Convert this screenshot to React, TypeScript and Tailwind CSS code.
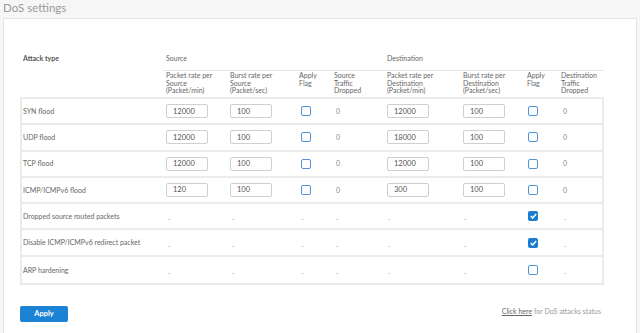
import React from 'react';

type Row = {
	label: string;
	src?: [string, string];
	dst?: [string, string];
	srcFlag?: boolean;
	dstFlag: boolean;
};

const rows: Row[] = [
	{ label: 'SYN flood', src: ['12000', '100'], dst: ['12000', '100'], srcFlag: false, dstFlag: false },
	{ label: 'UDP flood', src: ['12000', '100'], dst: ['18000', '100'], srcFlag: false, dstFlag: false },
	{ label: 'TCP flood', src: ['12000', '100'], dst: ['12000', '100'], srcFlag: false, dstFlag: false },
	{ label: 'ICMP/ICMPv6 flood', src: ['120', '100'], dst: ['300', '100'], srcFlag: false, dstFlag: false },
	{ label: 'Dropped source routed packets', dstFlag: true },
	{ label: 'Disable ICMP/ICMPv6 redirect packet', dstFlag: true },
	{ label: 'ARP hardening', dstFlag: false },
];

const cols = 'grid grid-cols-[143px_64px_69px_35px_53px_76px_64px_34px_46px]';

const Check = ({ on }: { on: boolean }) =>
	on ? (
		<span className="flex h-[10px] w-[10px] items-center justify-center rounded-[2px] bg-[#1b7dd0]">
			<svg width="7" height="6" viewBox="0 0 7 6">
				<path d="M0.8 3.1 L2.7 4.9 L6.2 1.1" fill="none" stroke="#fff" strokeWidth="1.5" />
			</svg>
		</span>
	) : (
		<span className="block h-[10px] w-[10px] rounded-[2px] border border-[#4f94d8] bg-white"></span>
	);

const Field = ({ value }: { value: string }) => (
	<div className="flex h-[14px] w-[42px] items-center rounded-[2px] border border-[#cfcfcf] bg-white pl-[6px] text-[7.5px] text-[#555]">
		{value}
	</div>
);

const Dash = () => <span className="text-[7px] text-[#aaa]">-</span>;

export default function App() {
	return (
		<div className="h-screen overflow-hidden bg-[#f6f6f6] font-['Lato',sans-serif]">
			<div className="h-[18px] pl-[3px] text-[11.5px] leading-[16px] text-[#9a9a9a]">DoS settings</div>
			<div className="mx-[3px] h-[400px] border border-[#e4e4e4] bg-white pl-[16px] pt-[33px]">
				<div className="w-[584px]">
					{/* header */}
					<div className={`${cols} h-[19px] text-[7px] text-[#666]`}>
						<div className="pl-[3px] font-bold leading-[12px] text-[#555]">Attack type</div>
						<div className="col-span-4 border-b border-[#e6e6e6] pl-[3px] leading-[12px]">Source</div>
						<div className="col-span-4 border-b border-[#e6e6e6] pl-[3px] leading-[12px]">Destination</div>
					</div>
					<div className={`${cols} h-[26px] pt-[1px] text-[7px] leading-[7.7px] text-[#666]`}>
						<div></div>
						<div className="pl-[3px]">Packet rate per<br />Source<br />(Packet/min)</div>
						<div className="pl-[3px]">Burst rate per<br />Source<br />(Packet/sec)</div>
						<div className="pl-[3px]">Apply<br />Flag</div>
						<div className="pl-[3px]">Source<br />Traffic<br />Dropped</div>
						<div className="pl-[3px]">Packet rate per<br />Destination<br />(Packet/min)</div>
						<div className="pl-[3px]">Burst rate per<br />Destination<br />(Packet/sec)</div>
						<div className="pl-[3px]">Apply<br />Flag</div>
						<div className="pl-[3px]">Destination<br />Traffic<br />Dropped</div>
					</div>
					{/* body */}
					<div className="border-2 border-[#ebebeb]">
						{rows.map((r, i) => (
							<div
								key={r.label}
								className={`${cols} -ml-[2px] h-[26.3px] items-center ${i < rows.length - 1 ? 'border-b-2 border-[#ebebeb]' : ''}`}
							>
								<div className="pl-[3px] text-[7px] text-[#666]">{r.label}</div>
								{r.src ? (
									<>
										<div className="pl-[3px]"><Field value={r.src[0]} /></div>
										<div className="pl-[3px]"><Field value={r.src[1]} /></div>
										<div className="pl-[5px]"><Check on={!!r.srcFlag} /></div>
										<div className="pl-[5px] text-[7px] text-[#888]">0</div>
										<div className="pl-[3px]"><Field value={r.dst![0]} /></div>
										<div className="pl-[3px]"><Field value={r.dst![1]} /></div>
										<div className="pl-[4px]"><Check on={r.dstFlag} /></div>
										<div className="pl-[5px] text-[7px] text-[#888]">0</div>
									</>
								) : (
									<>
										<div className="pl-[5px]"><Dash /></div>
										<div className="pl-[5px]"><Dash /></div>
										<div className="pl-[5px]"><Dash /></div>
										<div className="pl-[5px]"><Dash /></div>
										<div className="pl-[4px]"><Dash /></div>
										<div className="pl-[4px]"><Dash /></div>
										<div className="pl-[4px]"><Check on={r.dstFlag} /></div>
										<div className="pl-[6px]"><Dash /></div>
									</>
								)}
							</div>
						))}
					</div>
					<div className="mt-[21px] flex items-start justify-between">
						<button className="h-[16px] w-[48px] rounded-[2px] bg-[#1c82d3] text-[7.5px] font-bold text-white">
							Apply
						</button>
						<div className="pr-[3px] text-[7px] leading-[10px] text-[#999]">
							<span className="text-[#666] underline">Click here</span> for DoS attacks status
						</div>
					</div>
				</div>
			</div>
		</div>
	);
}
